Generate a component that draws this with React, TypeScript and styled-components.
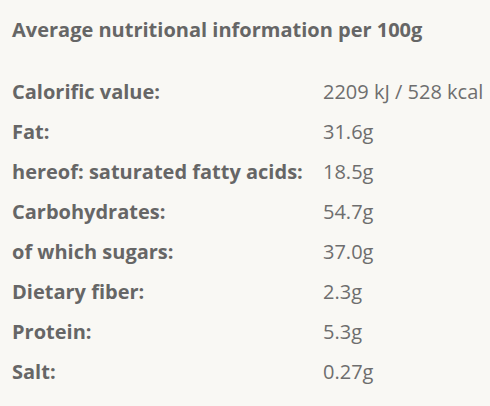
import React from "react";
import styled, { createGlobalStyle } from "styled-components";

const Global = createGlobalStyle`
  html, body { margin: 0; padding: 0; background: #f9f8f4; }
  body { font-family: "Open Sans", "Liberation Sans", sans-serif; }
`;

const Page = styled.div`
  width: 490px;
  height: 406px;
  box-sizing: border-box;
  padding: 10px 12px 0 12px;
  background: #f9f8f4;
  color: #666666;
`;

const Title = styled.h2`
  margin: 0 0 21px 0;
  font-size: 20px;
  font-weight: 700;
  line-height: 40px;
  color: #666666;
`;

const Table = styled.div`
  display: grid;
  grid-template-columns: 311px 1fr;
  grid-auto-rows: 40px;
  align-items: center;
`;

const Label = styled.div`
  font-size: 20px;
  font-weight: 700;
  color: #666666;
  white-space: nowrap;
`;

const Value = styled.div`
  font-size: 20px;
  font-weight: 400;
  color: #6e6e6e;
  white-space: nowrap;
`;

const rows: [string, string][] = [
  ["Calorific value:", "2209 kJ / 528 kcal"],
  ["Fat:", "31.6g"],
  ["hereof: saturated fatty acids:", "18.5g"],
  ["Carbohydrates:", "54.7g"],
  ["of which sugars:", "37.0g"],
  ["Dietary fiber:", "2.3g"],
  ["Protein:", "5.3g"],
  ["Salt:", "0.27g"],
];

export default function App() {
  return (
    <>
      <Global />
      <Page>
        <Title>Average nutritional information per 100g</Title>
        <Table>
          {rows.map(([l, v]) => (
            <React.Fragment key={l}>
              <Label>{l}</Label>
              <Value>{v}</Value>
            </React.Fragment>
          ))}
        </Table>
      </Page>
    </>
  );
}
